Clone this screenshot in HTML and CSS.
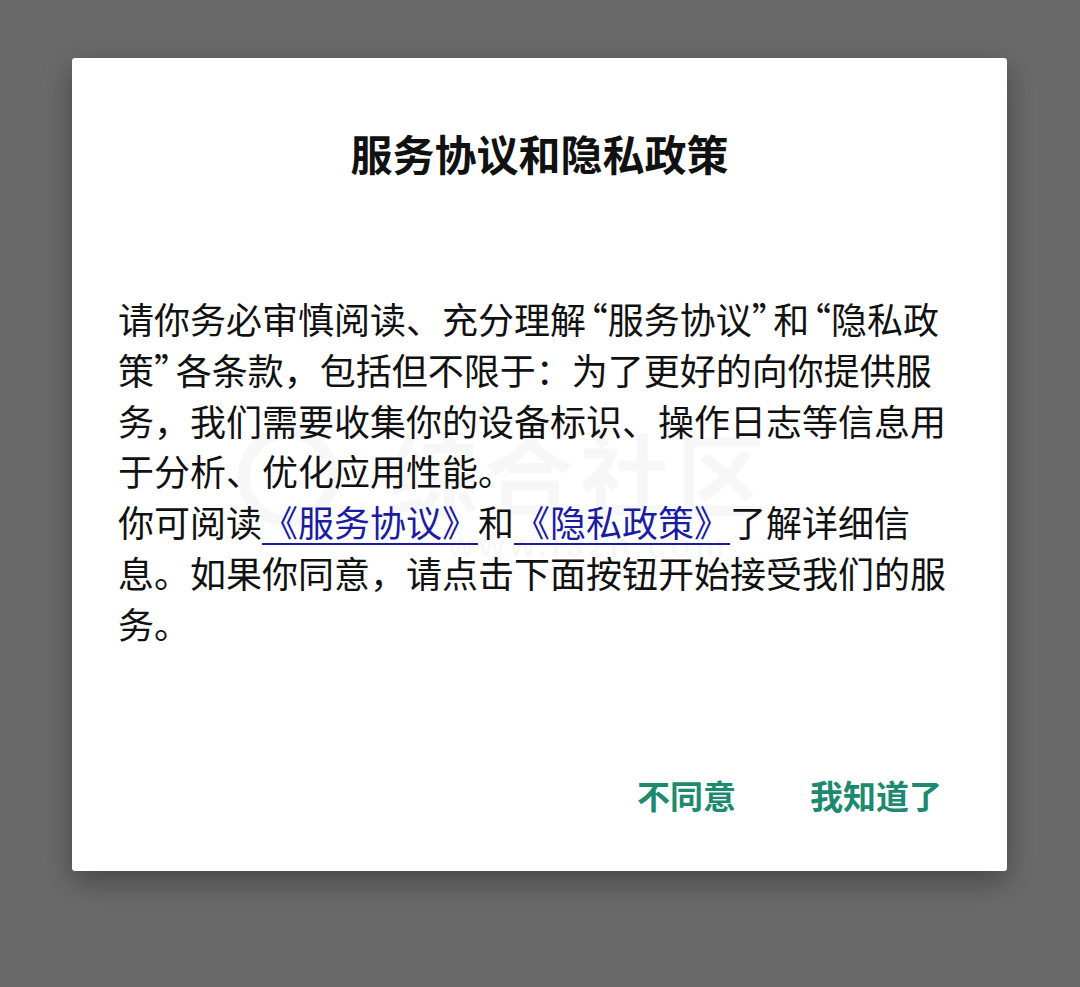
FILE: index.html
```html
<!DOCTYPE html>
<html lang="zh-CN">
<head>
<meta charset="utf-8">
<title>服务协议和隐私政策</title>
<link rel="stylesheet" href="styles.css">
</head>
<body>
<div class="screen">
  <div class="dialog">
    <h1 class="title">服务协议和隐私政策</h1>
    <div class="content">
      <div class="watermark" aria-hidden="true">
        <span class="wm-logo"></span>
        <span class="wm-text">综合社区</span>
        <span class="wm-url">www.i3zh.com</span>
      </div>
      <p class="line">请你务必审慎阅读、充分理解<span class="qo">“</span>服务协议<span class="qc">”</span>和<span class="qo">“</span>隐私政</p>
      <p class="line">策<span class="qc">”</span>各条款，包括但不限于：为了更好的向你提供服</p>
      <p class="line">务，我们需要收集你的设备标识、操作日志等信息用</p>
      <p class="line">于分析、优化应用性能。</p>
      <p class="line">你可阅读<a class="link" href="#">《服务协议》</a>和<a class="link" href="#">《隐私政策》</a>了解详细信</p>
      <p class="line">息。如果你同意，请点击下面按钮开始接受我们的服</p>
      <p class="line">务。</p>
    </div>
    <div class="actions">
      <span class="btn btn-disagree">不同意</span>
      <span class="btn btn-agree">我知道了</span>
    </div>
  </div>
</div>
</body>
</html>
```

FILE: styles.css
```css
html, body {
  margin: 0;
  padding: 0;
}
body {
  background: #6a6a6a;
  font-family: "Noto Sans CJK SC", "Noto Sans", sans-serif;
}
.screen {
  width: 1080px;
  height: 987px;
  padding-top: 58px;
  padding-left: 72px;
  box-sizing: border-box;
}
.dialog {
  width: 935px;
  height: 813px;
  background: #ffffff;
  border-radius: 3px;
  box-shadow: 0 10px 30px rgba(0, 0, 0, 0.35);
  box-sizing: border-box;
  padding: 69px 0 0 46px;
  display: flex;
  flex-direction: column;
}
.title {
  margin: 0 0 0 -46px;
  font-size: 42px;
  line-height: 52px;
  font-weight: 700;
  color: #111111;
  text-align: center;
}
.content {
  position: relative;
  margin-top: 114px;
  font-size: 36px;
  line-height: 50.8px;
  color: #111111;
}
.line {
  position: relative;
  margin: 0;
  white-space: nowrap;
}
.qo {
  margin-left: -0.4em;
}
.qc {
  margin-right: -0.4em;
}
.link {
  color: #1c1ca0;
  text-decoration: underline;
  text-decoration-thickness: 2px;
  text-underline-offset: 6px;
}
.watermark {
  position: absolute;
  left: 120px;
  top: 128px;
  width: 620px;
  height: 150px;
  pointer-events: none;
}
.wm-logo {
  position: absolute;
  left: 0;
  top: 6px;
  width: 76px;
  height: 76px;
  border: 12px solid rgba(0, 0, 0, 0.03);
  border-radius: 50%;
}
.wm-text {
  position: absolute;
  left: 150px;
  top: 0;
  font-size: 90px;
  line-height: 100px;
  font-weight: 700;
  letter-spacing: 6px;
  color: rgba(0, 0, 0, 0.03);
}
.wm-url {
  position: absolute;
  left: 210px;
  top: 104px;
  font-family: "Liberation Sans", sans-serif;
  font-size: 34px;
  line-height: 40px;
  font-weight: 700;
  letter-spacing: 4px;
  color: rgba(0, 0, 0, 0.03);
}
.actions {
  margin-top: 124px;
  display: flex;
  justify-content: flex-end;
  gap: 74px;
  padding-right: 65px;
}
.btn {
  font-size: 33px;
  line-height: 44px;
  font-weight: 700;
  color: #1d8a70;
}
```
